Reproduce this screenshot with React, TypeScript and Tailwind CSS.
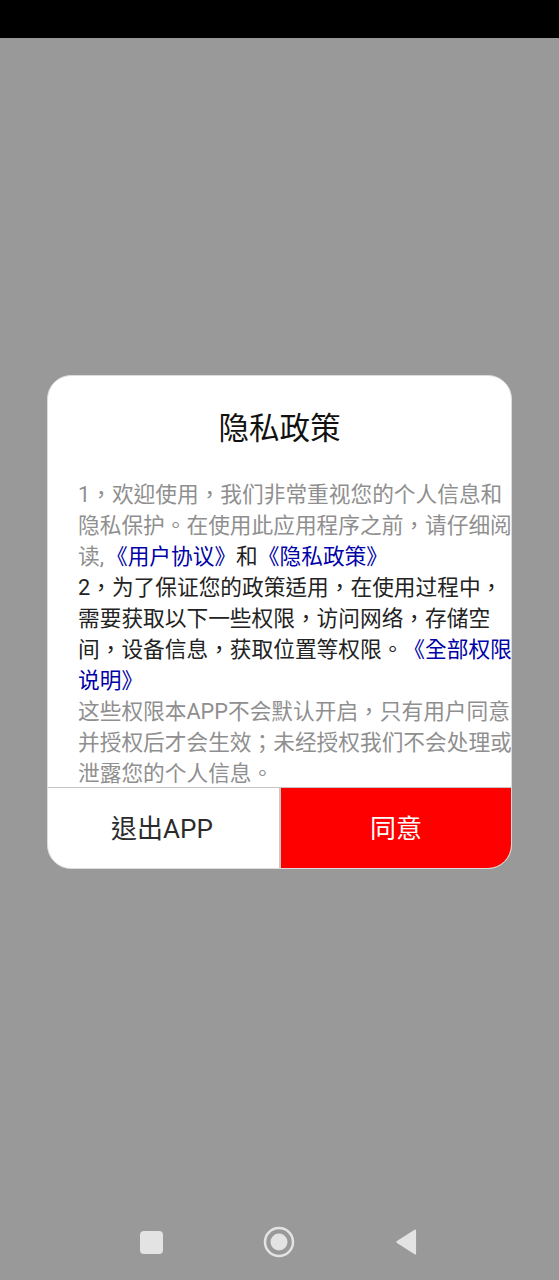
const cjk = "font-['Roboto','Noto_Sans_CJK_TC',sans-serif]"

export default function App() {
    return (
        <div className={`flex h-[1280px] w-[559px] flex-col overflow-hidden bg-[#999999] [text-spacing-trim:space-all] ${cjk}`}>
            {/* Status bar */}
            <div className="h-[38px] shrink-0 bg-black"></div>

            <div className="flex h-[337px] shrink-0"></div>

            {/* Dialog */}
            <div className="mx-[47px] flex h-[494px] w-[465px] shrink-0 flex-col overflow-hidden rounded-[24px] border border-[#dcdcdc] bg-white">
                <h1 className="mt-[30px] h-[46px] text-center text-[30.5px] leading-[46px] font-normal text-[#111111]">隐私政策</h1>

                <div className="mt-[27px] h-[308px] overflow-hidden pl-[30px] text-[21.7px] leading-[31px] whitespace-nowrap text-[#8f8f8f]">
                    <p>1，欢迎使用，我们非常重视您的个人信息和</p>
                    <p>隐私保护。在使用此应用程序之前，请仔细阅</p>
                    <p>
                        读,<span className="ml-[2px] text-[#0000a8]">《用户协议》</span>
                        <span className="text-[#222222]">和</span>
                        <span className="text-[#0000a8]">《隐私政策》</span>
                    </p>
                    <div className="text-[#222222]">
                        <p>2，为了保证您的政策适用，在使用过程中，</p>
                        <p>需要获取以下一些权限，访问网络，存储空</p>
                        <p>
                            间，设备信息，获取位置等权限。<span className="text-[#0000a8]">《全部权限</span>
                        </p>
                    </div>
                    <p className="text-[#0000a8]">说明》</p>
                    <p>这些权限本APP不会默认开启，只有用户同意</p>
                    <p>并授权后才会生效；未经授权我们不会处理或</p>
                    <p>泄露您的个人信息。</p>
                </div>

                {/* Buttons */}
                <div className="flex min-h-0 flex-1 border-t border-[#c4c4c4]">
                    <button className="flex w-[233px] items-center justify-center border-r-2 border-[#c9c9c9] pt-[2px] pr-[3px] text-[26px] text-[#2b2b2b]">
                        退出APP
                    </button>
                    <button className="flex flex-1 items-center justify-center bg-[#ff0000] pt-[2px] text-[26px] text-white">
                        同意
                    </button>
                </div>
            </div>

            {/* Navigation bar */}
            <div className="mt-auto flex h-[74px] shrink-0 items-start pt-[20px] pl-[140px]">
                <div className="mt-[5px] size-[23px] rounded-[4px] bg-[#e3e3e3]"></div>
                <svg className="ml-[100px] size-[32px]" viewBox="0 0 32 32">
                    <circle cx="16" cy="16" r="14" fill="none" stroke="#e3e3e3" strokeWidth="2.5" />
                    <circle cx="16" cy="16" r="8.5" fill="#e3e3e3" />
                </svg>
                <svg className="ml-[101px] mt-[3px] h-[26px] w-[21px]" viewBox="0 0 22 26">
                    <path d="M21 1v24a1 1 0 0 1-1.5.8L1 14a1.2 1.2 0 0 1 0-2L19.5.2A1 1 0 0 1 21 1z" fill="#e3e3e3" />
                </svg>
            </div>
        </div>
    )
}
